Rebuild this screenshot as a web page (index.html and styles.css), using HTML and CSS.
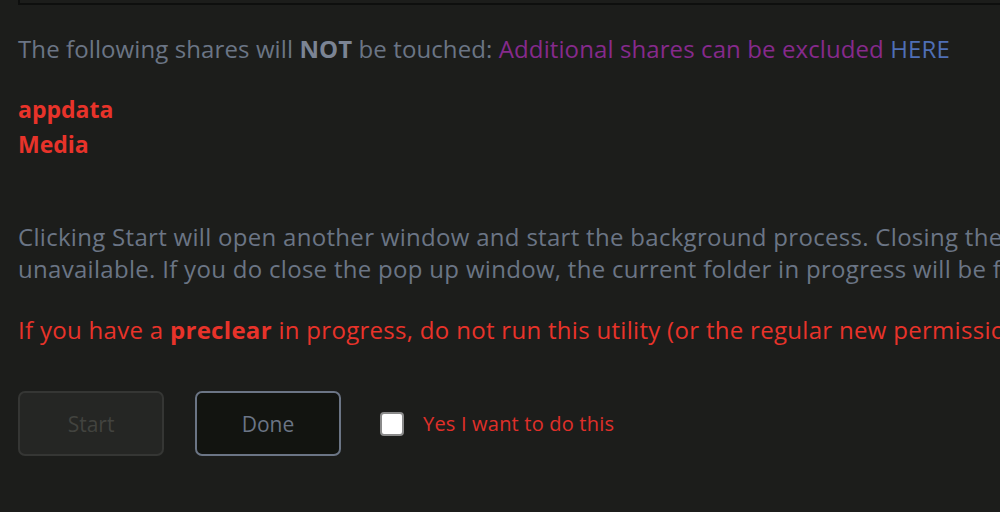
FILE: index.html
```html
<!DOCTYPE html>
<html lang="en">
<head>
    <meta charset="UTF-8">
    <meta name="viewport" content="width=device-width, initial-scale=1.0">
    <title>New Permissions</title>
    <link rel="stylesheet" href="styles.css">
</head>
<body>

    <div class="page">
        <div class="prev-box"></div>

        <p class="intro">The following shares will <b>NOT</b> be touched: <span class="purple">Additional shares can be excluded</span> <a href="#" class="link">HERE</a></p>

        <div class="share-list">
            <div class="share">appdata</div>
            <div class="share">Media</div>
        </div>

        <p class="note">Clicking Start will open another window and start the background process. Closing the pop up window will<br>unavailable. If you do close the pop up window, the current folder in progress will be finished.</p>

        <p class="warn">If you have a <b>preclear</b> in progress, do not run this utility (or the regular new permissions utility).</p>

        <div class="actions">
            <button class="btn btn-start" disabled>Start</button>
            <button class="btn btn-done">Done</button>
            <label class="confirm">
                <input type="checkbox" class="check">
                <span>Yes I want to do this</span>
            </label>
        </div>
    </div>

</body>
</html>
```

FILE: styles.css
```css
html, body {
    margin: 0;
    padding: 0;
    background-color: #1c1d1b;
    overflow: hidden;
}

body {
    font-family: "Open Sans", "Noto Sans", Arial, sans-serif;
    font-size: 24px;
    color: #6b7585;
}

.page {
    width: 1400px;
    padding-left: 18px;
}

.prev-box {
    height: 10px;
    margin-top: -9px;
    border: 2px solid #0e0f0e;
}

.intro {
    margin: 28px 0 0 0;
    line-height: 32px;
    letter-spacing: 0.1px;
    white-space: nowrap;
}

.intro b {
    color: #7b8494;
}

.purple {
    color: #862a8c;
}

.link {
    color: #4f6fb5;
    text-decoration: none;
}

.share-list {
    margin-top: 27px;
}

.share {
    color: #e8332a;
    font-weight: bold;
    font-size: 23px;
    line-height: 35px;
}

.note {
    margin: 59px 0 0 0;
    line-height: 32px;
    letter-spacing: 0.3px;
    white-space: nowrap;
}

.warn {
    margin: 29px 0 0 0;
    line-height: 32px;
    letter-spacing: 0.3px;
    color: #e8332a;
    white-space: nowrap;
}

.actions {
    display: flex;
    align-items: center;
    margin-top: 45px;
}

.btn {
    width: 146px;
    height: 65px;
    border-radius: 7px;
    font-family: inherit;
    font-size: 21px;
    margin-right: 31px;
}

.btn-start {
    background-color: #252624;
    border: 2px solid #353634;
    color: #42433f;
}

.btn-done {
    background-color: #121410;
    border: 2px solid #6b7585;
    color: #6b7585;
}

.confirm {
    display: flex;
    align-items: center;
    gap: 19px;
    color: #e0302a;
    font-size: 20px;
    letter-spacing: 0.2px;
    margin-left: 8px;
}

.check {
    appearance: none;
    width: 24px;
    height: 24px;
    margin: 0;
    background: #fff;
    border: 2px solid #8a8a8a;
    border-radius: 4px;
}
```
